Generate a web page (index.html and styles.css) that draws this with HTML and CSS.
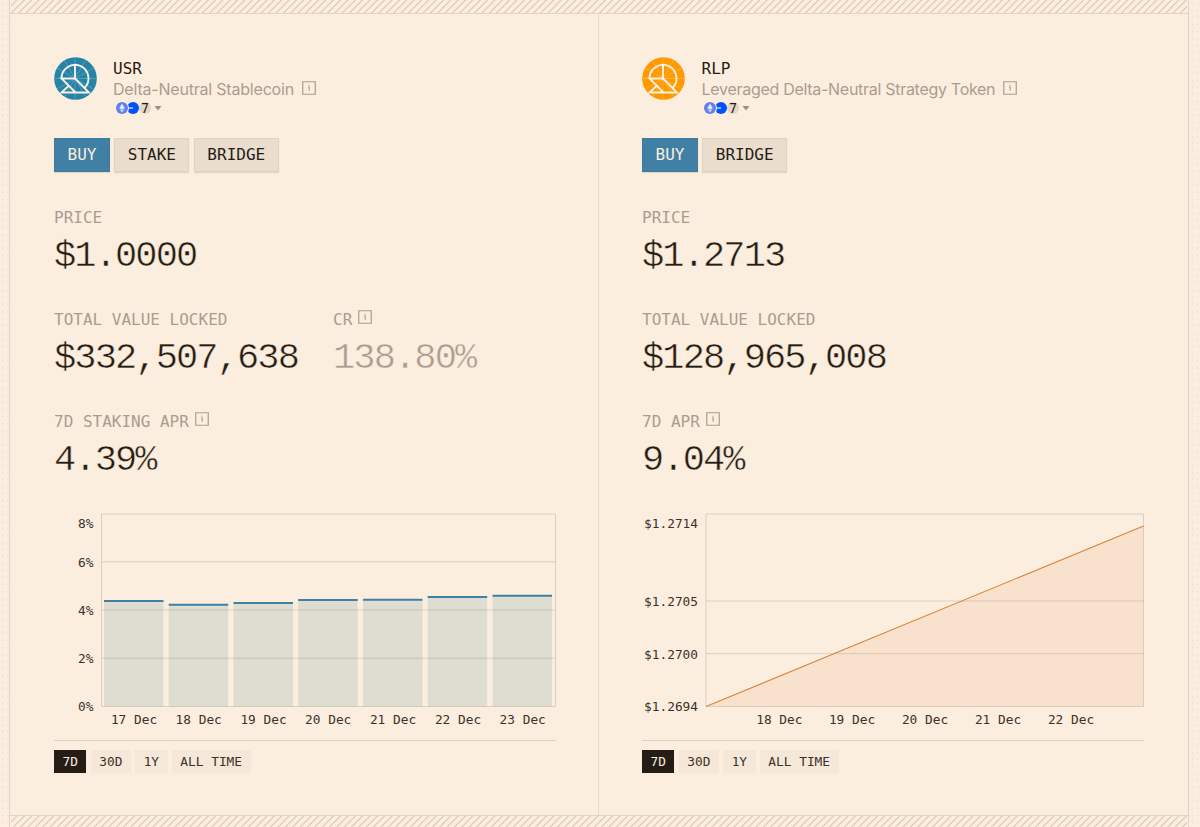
FILE: index.html
```html
<!DOCTYPE html>
<html lang="en">
  <head>
    <meta charset="UTF-8" />
    <meta name="viewport" content="width=device-width, initial-scale=1.0" />
    <title>USR / RLP</title>
    <link rel="stylesheet" href="styles.css">
  </head>
  <body>
    <!-- Shared icons -->
    <svg class="sprite" aria-hidden="true">
      <symbol id="icon-info" viewBox="0 0 14 14">
        <path d="M0.75 0.75h12.5v12.5h-12.5z" fill="none" stroke="currentColor" stroke-width="1.2" />
        <path d="M6 6h1.200v3.800M7 3.800v1" fill="none" stroke="currentColor" stroke-width="1.1" />
      </symbol>
      <symbol id="icon-token" viewBox="0 0 43 43">
        <circle cx="21.5" cy="21.5" r="21.3" fill="currentColor" />
        <path d="M21 0.5v42M0.5 21.5h42M10.500 3.300l21 36.400M31.500 3.300l-21 36.400M3 11l36.400 21M39.400 11L3 32" fill="none" stroke="#fff" stroke-opacity="0.25" stroke-width="0.8" />
        <path d="M7.500 21.500A13.500 13.500 0 1 1 30.500 31M21 8v13.500H7.500L21.500 35.500M21 21.500L35 35.500H7.500L15 28.500" fill="none" stroke="#fcf0e2" stroke-width="1.900" />
      </symbol>
      <symbol id="icon-chains" viewBox="0 0 48 14">
        <circle cx="18" cy="7" r="6" fill="#0052ff" />
        <path d="M12 7h6" stroke="#fceedf" stroke-width="1.2" />
        <circle cx="7" cy="7" r="7" fill="#fceedf" />
        <circle cx="7" cy="7" r="6" fill="#627eea" />
        <path d="M7 2.500l2.800 4.600L7 8.700 4.200 7.100zM7 11.500l2.700-3.700L7 9.400 4.300 7.800z" fill="#fff" fill-opacity="0.8" />
        <circle cx="30" cy="7" r="6" fill="#e3d8c8" />
        <path d="M39.500 5h7L43 9.500z" fill="#9b9083" />
      </symbol>
    </svg>

    <div class="page">
      <div class="stripes"></div>
      <main class="cards">
        <!-- USR -->
        <section class="card">
          <header class="token">
            <svg class="token-logo token-logo-usr"><use href="#icon-token" /></svg>
            <div class="token-info">
              <h2 class="token-symbol">USR</h2>
              <p class="token-name">Delta-Neutral Stablecoin <svg class="icon-info"><use href="#icon-info" /></svg></p>
              <div class="chains"><svg class="chains-icons"><use href="#icon-chains" /></svg><span class="chains-count">7</span></div>
            </div>
          </header>
          <div class="actions">
            <button class="btn btn-primary">BUY</button>
            <button class="btn">STAKE</button>
            <button class="btn">BRIDGE</button>
          </div>
          <div class="stats">
            <div class="stat">
              <h3 class="stat-label">PRICE</h3>
              <div class="stat-value">$1.0000</div>
            </div>
            <div class="stat-row">
              <div class="stat">
                <h3 class="stat-label">TOTAL VALUE LOCKED</h3>
                <div class="stat-value">$332,507,638</div>
              </div>
              <div class="stat">
                <h3 class="stat-label">CR <svg class="icon-info"><use href="#icon-info" /></svg></h3>
                <div class="stat-value stat-value-muted">138.80%</div>
              </div>
            </div>
            <div class="stat">
              <h3 class="stat-label">7D STAKING APR <svg class="icon-info"><use href="#icon-info" /></svg></h3>
              <div class="stat-value">4.39%</div>
            </div>
          </div>
          <svg class="chart" viewBox="0 0 502 224">
            <g class="chart-bars">
              <path d="M50 93h59.500v105.500H50zM114.700 97h59.500v101.500h-59.500zM179.500 95h59.500v103.500h-59.500zM244.200 92h59.500v106.500h-59.500zM309 91.700h59.500v106.800H309zM373.700 89h59.500v109.500h-59.500zM438.500 88h59.500v110.500h-59.500z" />
            </g>
            <g class="chart-tops">
              <path d="M50 93h59.500M114.700 96.700h59.500M179.500 95h59.500M244.200 92h59.500M309 91.700h59.500M373.700 89h59.500M438.500 87.700h59.500" />
            </g>
            <path class="chart-grid" d="M47.500 6h454v192.500h-454zM47.500 53.800h454M47.500 102h454M47.500 150.200h454" />
            <g class="chart-label-y">
              <text x="39.500" y="20">8%</text>
              <text x="39.500" y="58.500">6%</text>
              <text x="39.500" y="107">4%</text>
              <text x="39.500" y="155">2%</text>
              <text x="39.500" y="203">0%</text>
            </g>
            <g class="chart-label-x">
              <text x="80" y="216">17 Dec</text>
              <text x="144.700" y="216">18 Dec</text>
              <text x="209.500" y="216">19 Dec</text>
              <text x="274.200" y="216">20 Dec</text>
              <text x="339" y="216">21 Dec</text>
              <text x="404" y="216">22 Dec</text>
              <text x="468.700" y="216">23 Dec</text>
            </g>
          </svg>
          <nav class="ranges">
            <button class="range range-active">7D</button>
            <button class="range">30D</button>
            <button class="range">1Y</button>
            <button class="range">ALL TIME</button>
          </nav>
        </section>

        <!-- RLP -->
        <section class="card card-alt">
          <header class="token">
            <svg class="token-logo token-logo-rlp"><use href="#icon-token" /></svg>
            <div class="token-info">
              <h2 class="token-symbol">RLP</h2>
              <p class="token-name">Leveraged Delta-Neutral Strategy Token <svg class="icon-info"><use href="#icon-info" /></svg></p>
              <div class="chains"><svg class="chains-icons"><use href="#icon-chains" /></svg><span class="chains-count">7</span></div>
            </div>
          </header>
          <div class="actions">
            <button class="btn btn-primary">BUY</button>
            <button class="btn">BRIDGE</button>
          </div>
          <div class="stats">
            <div class="stat">
              <h3 class="stat-label">PRICE</h3>
              <div class="stat-value">$1.2713</div>
            </div>
            <div class="stat">
              <h3 class="stat-label">TOTAL VALUE LOCKED</h3>
              <div class="stat-value">$128,965,008</div>
            </div>
            <div class="stat">
              <h3 class="stat-label">7D APR <svg class="icon-info"><use href="#icon-info" /></svg></h3>
              <div class="stat-value">9.04%</div>
            </div>
          </div>
          <svg class="chart" viewBox="0 0 502 224">
            <path class="chart-area" d="M64 198.500L501.500 18v180.500z" />
            <path class="chart-grid" d="M64 6h437.500v192.500H64zM64 93h437.500M64 145.700h437.500" />
            <path class="chart-line" d="M64 198.500L501.500 18" />
            <g class="chart-label-y">
              <text x="56" y="20">$1.2714</text>
              <text x="56" y="97.500">$1.2705</text>
              <text x="56" y="150.500">$1.2700</text>
              <text x="56" y="203">$1.2694</text>
            </g>
            <g class="chart-label-x">
              <text x="137.300" y="216">18 Dec</text>
              <text x="210" y="216">19 Dec</text>
              <text x="283" y="216">20 Dec</text>
              <text x="356" y="216">21 Dec</text>
              <text x="429" y="216">22 Dec</text>
            </g>
          </svg>
          <nav class="ranges">
            <button class="range range-active">7D</button>
            <button class="range">30D</button>
            <button class="range">1Y</button>
            <button class="range">ALL TIME</button>
          </nav>
        </section>
      </main>
      <div class="stripes"></div>
    </div>
  </body>
</html>
```
FILE: styles.css
```css
* {
  box-sizing: border-box;
}

body {
  margin: 0;
  padding: 0 11px 0 9px;
  height: 827px;
  overflow: hidden;
  background-color: #fbeee1;
  background-image:
    radial-gradient(circle, rgba(150, 120, 90, 0.07) 0.8px, transparent 1.4px),
    radial-gradient(circle, rgba(150, 120, 90, 0.06) 0.8px, transparent 1.4px);
  background-size: 5px 7px, 7px 11px;
  color: #251c15;
  font-family: 'DejaVu Sans Mono', monospace;
}

h2,
h3,
p {
  margin: 0;
  font-weight: normal;
}

.sprite {
  display: none;
}

.page {
  height: 827px;
  border-left: 1px solid #e2d3c5;
  border-right: 1px solid #e2d3c5;
  background: #fceedf;
}

.stripes {
  height: 13px;
  margin: 0 1px;
  background: repeating-linear-gradient(
    135deg,
    #fceedf 0 3.2px,
    #e1cebc 3.8px 4.6px,
    #fceedf 5.2px
  );
}

.cards {
  display: grid;
  grid-template-columns: 589px 1fr;
  height: 803px;
  border-top: 1px solid #e2d3c5;
  border-bottom: 1px solid #e2d3c5;
}

.card {
  padding: 43px 42px 0 44px;
  border-right: 1px solid #e6d8ca;
}

.card-alt {
  padding: 43px 44px 0 43px;
  border-right: 0;
}

/* Token header */
.token {
  display: flex;
  gap: 16px;
  height: 81px;
}

.card-alt .token {
  gap: 16.6px;
}

.token-logo {
  width: 43px;
  height: 43px;
}

.token-logo-usr {
  color: #2583a8;
}

.token-logo-rlp {
  color: #ff9900;
}

.token-symbol {
  padding-top: 1px;
  font-size: 16px;
  line-height: 21px;
}

.token-name {
  display: flex;
  gap: 8px;
  font-family: Inter, sans-serif;
  font-size: 16px;
  line-height: 21px;
  letter-spacing: -0.2px;
  color: #a99d8f;
}

.card-alt .token-name {
  letter-spacing: -0.29px;
}

.icon-info {
  width: 14px;
  height: 14px;
  margin-top: 2px;
  color: #a99d8f;
}

.chains {
  display: flex;
  position: relative;
  margin: 1px 0 0 2px;
  height: 14px;
}

.card-alt .chains {
  margin-left: 1.4px;
}

.chains-icons {
  width: 48px;
  height: 14px;
}

/* count sits on top of the third chain circle */
.chains-count {
  position: absolute;
  left: 26px;
  top: 0;
  font-size: 13.5px;
  line-height: 14px;
}

/* Buttons */
button {
  border: 0;
  margin: 0;
  font-family: inherit;
  color: inherit;
}

.actions {
  display: flex;
  gap: 4.4px;
}

.btn {
  height: 34px;
  padding: 0 13.5px 1px;
  background: #eaddcd;
  box-shadow: inset 0 0 0 1px rgba(60, 40, 20, 0.05), 0 1px 1px rgba(60, 40, 20, 0.12);
  font-size: 16px;
}

.btn-primary {
  background: #4080a5;
  color: #fceedf;
}

/* Stats */
.stats {
  display: flex;
  flex-direction: column;
  padding-top: 35px;
}

.stat-row {
  display: flex;
  gap: 35px;
}

.stat {
  height: 102px;
}

.stat-label {
  display: flex;
  gap: 6px;
  font-size: 16px;
  line-height: 22px;
  color: #a99d8f;
}

.stat-label .icon-info {
  margin-top: 1px;
}

/* outline in the card colour thins the regular weight down to light */
.stat-value {
  font-family: 'Liberation Mono', monospace;
  font-size: 37px;
  line-height: 55px;
  letter-spacing: -1.87px;
  -webkit-text-stroke: 0.5px #fceedf;
}

.stat-value-muted {
  color: #a99d8f;
}

/* Charts */
.chart {
  display: block;
  width: 502px;
  height: 224px;
  margin-top: -5px;
}

.chart text {
  font-size: 12.8px;
  fill: #3b3128;
}

.chart-label-x text {
  text-anchor: middle;
}

.chart-label-y text {
  text-anchor: end;
}

.chart-grid {
  fill: none;
  stroke: #7d6c5c;
  stroke-opacity: 0.24;
}

.chart-bars {
  fill: #deddd2;
}

.chart-tops {
  stroke: #4080a5;
  stroke-width: 2;
}

.chart-area {
  fill: #f9e2cd;
}

.chart-line {
  fill: none;
  stroke: #dc8237;
  stroke-width: 1.1;
}

/* Range switcher */
.ranges {
  display: flex;
  gap: 4.3px;
  margin-top: 8px;
  padding-top: 9px;
  border-top: 1px solid #e0d2c3;
}

.range {
  height: 23px;
  padding: 0 8.5px 1px;
  background: #f5e8d9;
  color: #3b3128;
  font-size: 12.8px;
}

.range-active {
  background: #251c15;
  color: #fceedf;
}
```
